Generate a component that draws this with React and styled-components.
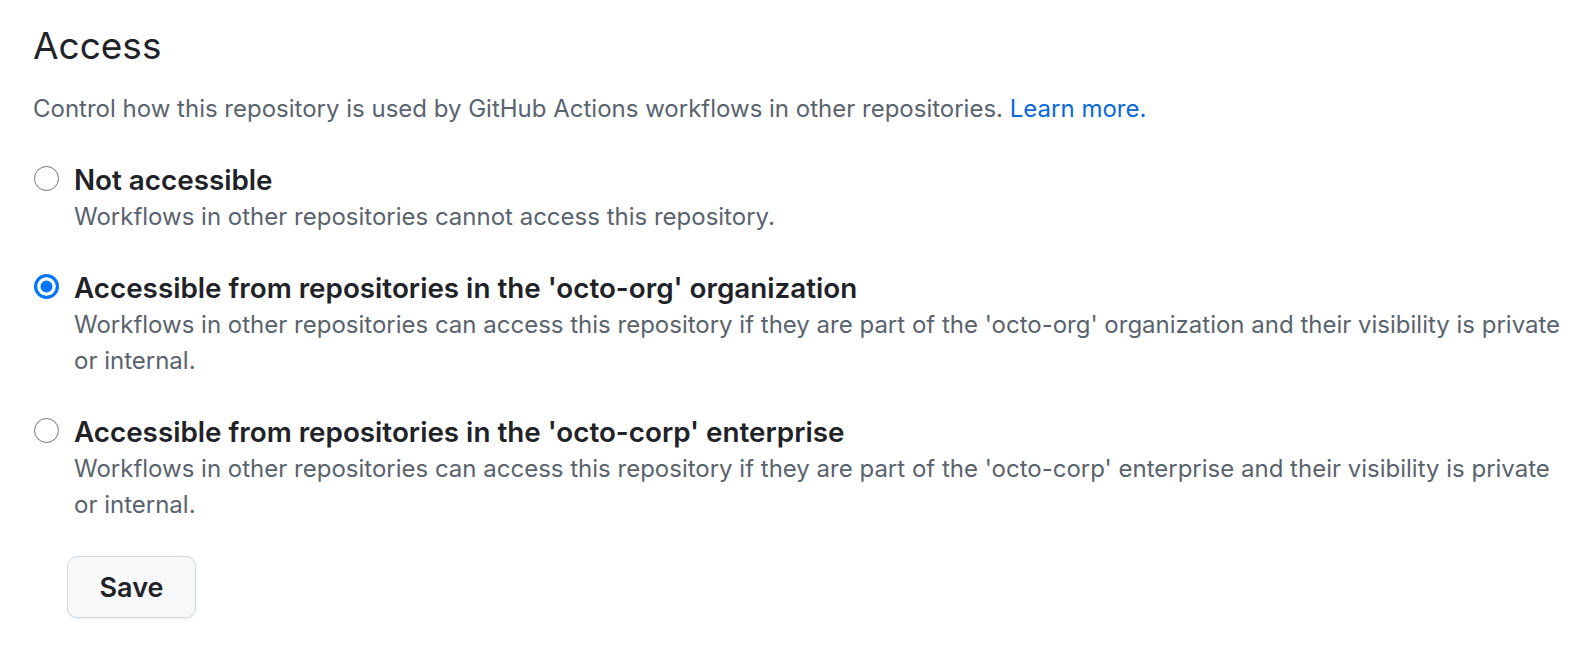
import styled, { createGlobalStyle } from "styled-components";
import { useState } from "react";

const GlobalStyle = createGlobalStyle`
  body {
    margin: 0;
    background: #ffffff;
    font-family: Inter, "Noto Sans", sans-serif;
    color: #1f2328;
  }
`;

const Page = styled.div`
  padding: 22px 24px 24px 33px;
`;

const Heading = styled.h2`
  margin: 0;
  font-size: 37px;
  font-weight: 400;
  line-height: 48px;
  color: #1f2328;
`;

const Description = styled.p`
  margin: 21px 0 0;
  font-size: 24px;
  line-height: 36px;
  color: #59636e;
`;

const Link = styled.a`
  color: #0969da;
  text-decoration: none;
`;

const OptionList = styled.div`
  display: flex;
  flex-direction: column;
  gap: 34px;
  margin-top: 34px;
`;

const Option = styled.label`
  display: flex;
  align-items: flex-start;
  gap: 15px;
  cursor: pointer;
`;

const Radio = styled.input.attrs({ type: "radio" })`
  appearance: none;
  flex: none;
  width: 25px;
  height: 25px;
  margin: 5px 0 0 1px;
  border-radius: 50%;
  border: 1.5px solid #767676;
  background: #ffffff;
  cursor: pointer;

  &:checked {
    border: 3px solid #0075ff;
    background: #0075ff;
    box-shadow: inset 0 0 0 3.5px #ffffff;
  }
`;

const OptionText = styled.div`
  display: flex;
  flex-direction: column;
`;

const OptionTitle = styled.span`
  font-size: 27.8px;
  font-weight: 600;
  line-height: 38px;
  color: #1f2328;
`;

const OptionNote = styled.span`
  font-size: 24px;
  line-height: 36px;
  color: #59636e;
`;

const SaveButton = styled.button`
  margin: 33px 0 0 34px;
  width: 129px;
  height: 62px;
  border: 1.5px solid #d1d9e0;
  border-radius: 10px;
  background: #f6f8fa;
  box-shadow: 0 2px 0 rgba(31, 35, 40, 0.04);
  font-family: Inter, "Noto Sans", sans-serif;
  font-size: 27px;
  font-weight: 600;
  color: #1f2328;
  cursor: pointer;
`;

const options = [
  {
    id: "none",
    title: "Not accessible",
    note: "Workflows in other repositories cannot access this repository.",
  },
  {
    id: "org",
    title: "Accessible from repositories in the 'octo-org' organization",
    note:
      "Workflows in other repositories can access this repository if they are part of the 'octo-org' organization and their visibility is private or internal.",
  },
  {
    id: "enterprise",
    title: "Accessible from repositories in the 'octo-corp' enterprise",
    note:
      "Workflows in other repositories can access this repository if they are part of the 'octo-corp' enterprise and their visibility is private or internal.",
  },
];

export default function App() {
  const [access, setAccess] = useState("org");

  return (
    <Page>
      <GlobalStyle />
      <Heading>Access</Heading>
      <Description>
        Control how this repository is used by GitHub Actions workflows in other
        repositories. <Link href="#">Learn more.</Link>
      </Description>
      <OptionList>
        {options.map((opt) => (
          <Option key={opt.id}>
            <Radio
              name="access"
              checked={access === opt.id}
              onChange={() => setAccess(opt.id)}
            />
            <OptionText>
              <OptionTitle>{opt.title}</OptionTitle>
              <OptionNote>{opt.note}</OptionNote>
            </OptionText>
          </Option>
        ))}
      </OptionList>
      <SaveButton>Save</SaveButton>
    </Page>
  );
}
